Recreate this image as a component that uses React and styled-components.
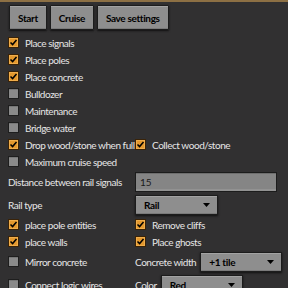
import React from 'react';
import styled, { createGlobalStyle } from 'styled-components';

//------------------------------------------------------------------------------
// STYLE:
//------------------------------------------------------------------------------
const FONT = `Lato, "Liberation Sans", Arial, sans-serif`;

const GlobalStyle = createGlobalStyle`
  html, body {
    margin: 0;
    padding: 0;
    background: #313031;
  }
  body {
    width: 288px;
    height: 288px;
    overflow: hidden;
    font-family: ${FONT};
    font-size: 10px;
    color: #e6e6e6;
  }
`;

const Frame = styled.div`
  display: flex;
  flex-direction: column;
  border-top: 2px solid #8d7044;
`;

const Toolbar = styled.div`
  display: flex;
  gap: 3px;
  padding: 3px 0 0 9px;
`;

const Button = styled.button`
  height: 25px;
  padding: 0 8px;
  background: #8e8e8e;
  border: 1px solid #1c1c1c;
  border-radius: 1px;
  box-shadow: inset 0 1px 0 #a3a3a3, inset 0 -1px 0 #7a7a7a, 0 1px 2px #111;
  font: bold 10px ${FONT};
  letter-spacing: -0.35px;
  color: #000;
`;

const Body = styled.div`
  display: flex;
  flex-direction: column;
  padding: 4px 11px 0 8px;
`;

const Row = styled.div`
  display: grid;
  grid-template-columns: 127px 1fr;
  align-items: center;
  height: ${p => (p.tall ? 23 : 17)}px;
`;

const Cell = styled.div`
  display: flex;
  align-items: center;
  gap: ${p => p.gap || 6}px;
  white-space: nowrap;
`;

const Label = styled.span`
  color: #e6e6e6;
  white-space: nowrap;
  letter-spacing: -0.45px;
`;

const Box = styled.span`
  width: 11px;
  height: 11px;
  flex: none;
  box-sizing: border-box;
  display: inline-flex;
  align-items: center;
  justify-content: center;
  border: 1px solid ${p => (p.on ? '#3a2308' : '#1e1e1e')};
  background: ${p => (p.on ? '#e3982e' : '#8a8a8a')};
  box-shadow: ${p => (p.on ? 'inset 0 0 0 1px #f0ad4a' : 'inset 0 1px 0 #777')};
`;

const Input = styled.div`
  flex: 1;
  height: 20px;
  box-sizing: border-box;
  padding-left: 4px;
  display: flex;
  align-items: center;
  background: #858585;
  border: 1px solid #1c1c1c;
  box-shadow: inset 0 -2px 0 #929292, inset 0 1px 0 #6e6e6e;
  color: #1a1a1a;
`;

const Select = styled.div`
  width: ${p => p.w || 82}px;
  height: 20px;
  box-sizing: border-box;
  padding: 0 7px 0 8px;
  display: flex;
  align-items: center;
  justify-content: space-between;
  background: #8e8e8e;
  border: 1px solid #1c1c1c;
  box-shadow: inset 0 1px 0 #a3a3a3, inset 0 -1px 0 #7a7a7a, 0 1px 2px #111;
  font: bold 10px ${FONT};
  letter-spacing: -0.3px;
  color: #000;
`;

//------------------------------------------------------------------------------
// COMPONENT:
//------------------------------------------------------------------------------
const Check = ({ on, label }) => (
  <Cell>
    <Box on={on}>
      {on && (
        <svg width="9" height="9" viewBox="0 0 9 9">
          <path d="M1.5 4.5 L3.6 6.6 L7.5 2" fill="none" stroke="#000" strokeWidth="1.5" />
        </svg>
      )}
    </Box>
    <Label>{label}</Label>
  </Cell>
);

const Dropdown = ({ value, w }) => (
  <Select w={w}>
    <span>{value}</span>
    <svg width="7" height="4" viewBox="0 0 7 4">
      <path d="M0 0 H7 L3.5 4 Z" fill="#000" />
    </svg>
  </Select>
);

const App = () => (
  <Frame>
    <GlobalStyle />
    <Toolbar>
      <Button>Start</Button>
      <Button>Cruise</Button>
      <Button>Save settings</Button>
    </Toolbar>
    <Body>
      <Row><Check on label="Place signals" /></Row>
      <Row><Check on label="Place poles" /></Row>
      <Row><Check on label="Place concrete" /></Row>
      <Row><Check label="Bulldozer" /></Row>
      <Row><Check label="Maintenance" /></Row>
      <Row><Check label="Bridge water" /></Row>
      <Row>
        <Check on label="Drop wood/stone when full" />
        <Check on label="Collect wood/stone" />
      </Row>
      <Row><Check label="Maximum cruise speed" /></Row>
      <Row tall>
        <Label>Distance between rail signals</Label>
        <Input>15</Input>
      </Row>
      <Row tall>
        <Label>Rail type</Label>
        <Dropdown value="Rail" w={83} />
      </Row>
      <Row>
        <Check on label="place pole entities" />
        <Check on label="Remove cliffs" />
      </Row>
      <Row>
        <Check on label="place walls" />
        <Check on label="Place ghosts" />
      </Row>
      <Row tall>
        <Check label="Mirror concrete" />
        <Cell gap={4}>
          <Label>Concrete width</Label>
          <Dropdown value="+1 tile" />
        </Cell>
      </Row>
      <Row tall>
        <Check label="Connect logic wires" />
        <Cell gap={4}>
          <Label>Color</Label>
          <Dropdown value="Red" />
        </Cell>
      </Row>
    </Body>
  </Frame>
);

export default App;
